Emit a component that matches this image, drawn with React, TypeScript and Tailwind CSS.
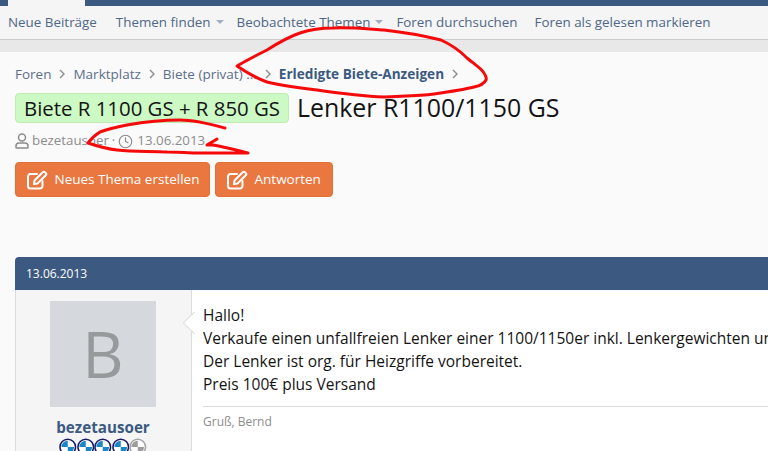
import React from 'react';
import { Clock } from 'lucide-react';

const NAV_ITEMS = [
  { label: 'Neue Beiträge', caret: false, gap: 'ml-0' },
  { label: 'Themen finden', caret: true, gap: 'ml-[19px]' },
  { label: 'Beobachtete Themen', caret: true, gap: 'ml-[13px]' },
  { label: 'Foren durchsuchen', caret: false, gap: 'ml-[13px]' },
  { label: 'Foren als gelesen markieren', caret: false, gap: 'ml-[17px]' },
];

const CRUMBS = ['Foren', 'Marktplatz', 'Biete (privat) ...'];

const Chevron = () => (
  <svg width="6" height="10" viewBox="0 0 6 10" className="mx-[8px] shrink-0" fill="none" stroke="#8c8c8c" strokeWidth="1.4">
    <path d="M1 1l4 4-4 4" />
  </svg>
);

const Roundel = ({ grey }: { grey?: boolean }) => {
  const a = grey ? '#9c9c9c' : '#1b86c6';
  const ring = grey ? '#a5a5a5' : '#1a1a66';
  return (
    <svg width="17.5" height="18" viewBox="0 0 18 18" className="shrink-0">
      <circle cx="9" cy="9" r="8" fill="#fff" stroke={ring} strokeWidth="1.6" />
      <path d="M9 9V2.5A6.5 6.5 0 0 0 2.5 9zM9 9v6.5A6.5 6.5 0 0 0 15.5 9z" fill={a} />
    </svg>
  );
};

const EditIcon = () => (
  <svg width="21" height="20" viewBox="0 0 21 20" className="shrink-0" fill="none" stroke="#fff" strokeWidth="2" strokeLinejoin="round" strokeLinecap="round">
    <path d="M15.5 11v5a2.5 2.5 0 0 1-2.5 2.5H3.5A2.5 2.5 0 0 1 1 16V6.500A2.500 2.500 0 0 1 3.500 4H10" />
    <path d="M7.500 10.500L15.800 2.200a1.500 1.500 0 0 1 2.100 0l.9.9a1.500 1.500 0 0 1 0 2.100L10.500 13.500l-3.500.5z" />
  </svg>
);

const ActionButton = ({ label, width }: { label: string; width: string }) => (
  <button className={`h-[35px] ${width} flex items-center gap-[6.5px] rounded-[4px] bg-[#e9773f] border border-[#e06f38] pl-[11px] text-white text-[13.5px]`}>
    <EditIcon />
    {label}
  </button>
);

export default function App() {
  return (
    <div className="relative h-[451px] w-[768px] overflow-hidden bg-[#fafafa] font-['Open_Sans','Noto_Sans',sans-serif] text-[#141414]">
      {/* top strip */}
      <div className="flex h-[6px] bg-[#3c5a81]">
        <div className="ml-[8px] w-[77px] bg-[#f5f5f5]" />
      </div>

      {/* sub nav */}
      <nav className="flex h-[34px] items-center border-b border-[#cbcbcb] bg-[#f5f5f5] pl-[8px] text-[13.4px] text-[#4f6786]">
        {NAV_ITEMS.map(item => (
          <span key={item.label} className={`flex items-center whitespace-nowrap ${item.gap}`}>
            {item.label}
            {item.caret && <span className="ml-[5px] h-0 w-0 border-x-[4px] border-t-[4px] border-x-transparent border-t-[#a3afc0]" />}
          </span>
        ))}
      </nav>
      <div className="h-[12px] bg-[#e8e8e8]" />

      <main className="px-[15px]">
        {/* breadcrumb */}
        <div className="mt-[13px] flex h-[18px] items-center text-[13.5px] text-[#5b6f8c]">
          {CRUMBS.map(c => (
            <React.Fragment key={c}>
              <span className="whitespace-nowrap">{c}</span>
              <Chevron />
            </React.Fragment>
          ))}
          <span className="whitespace-nowrap text-[13.6px] font-bold text-[#3c5a81]">Erledigte Biete-Anzeigen</span>
          <Chevron />
        </div>

        {/* title */}
        <h1 className="mt-[10px] flex h-[30px] items-center whitespace-nowrap text-[24.9px] font-normal">
          <span className="mr-[8px] flex h-[30px] w-[274px] items-center justify-center rounded-[4px] border border-[#bfeab4] bg-[#ccf9c4] text-[20.4px]">Biete R 1100 GS + R 850 GS</span>
          Lenker R1100/1150 GS
        </h1>

        {/* meta */}
        <div className="mt-[9px] flex h-[18px] items-center text-[13.3px] text-[#8c8c8c]">
          <svg width="14" height="16" viewBox="0 0 14 16" className="mr-[3px] shrink-0" fill="none" stroke="#8c8c8c" strokeWidth="1.5">
            <circle cx="7" cy="4.500" r="3.500" />
            <path d="M1 14.500v-1.500a3 3 0 0 1 3-3h6a3 3 0 0 1 3 3v1.500a.5.5 0 0 1-.5.5h-11a.5.5 0 0 1-.5-.5z" />
          </svg>
          <span>bezetausoer</span>
          <span className="mx-[3px]">·</span>
          <Clock size={15} strokeWidth={1.9} className="mr-[4px]" />
          <span>13.06.2013</span>
        </div>

        {/* buttons */}
        <div className="mt-[12px] flex gap-[5px]">
          <ActionButton label="Neues Thema erstellen" width="w-[195px]" />
          <ActionButton label="Antworten" width="w-[118px]" />
        </div>

        {/* post block */}
        <section className="mt-[60px] -mr-[15px]">
          <div className="flex h-[33px] items-center rounded-tl-[4px] bg-[#3c5a81] pl-[11px] text-[12px] text-white">13.06.2013</div>
          <div className="flex h-[161px]">
            <aside className="flex w-[177px] shrink-0 flex-col items-center border-x border-[#dcdcdc] bg-[#f5f5f5] pr-[1px] pt-[11px]">
              <div className="flex h-[106px] w-[106px] shrink-0 items-center justify-center bg-[#d5d8dc] text-[64px] leading-none text-[#969a9d]">B</div>
              <div className="mt-[9px] text-[15.2px] font-bold leading-[22px] text-[#3c5a81]">bezetausoer</div>
              <div className="flex shrink-0">
                <Roundel />
                <Roundel />
                <Roundel />
                <Roundel />
                <Roundel grey />
              </div>
            </aside>
            <article className="relative flex-1 bg-white pl-[11px] pt-[14px]">
              <span className="absolute left-[-6px] top-[25px] h-[16px] w-[16px] rotate-45 border-b border-l border-[#dcdcdc] bg-white" />
              <div className="relative whitespace-nowrap text-[15.5px] leading-[23px]">
                <p>Hallo!</p>
                <p>Verkaufe einen unfallfreien Lenker einer 1100/1150er inkl. Lenkergewichten und</p>
                <p>Der Lenker ist org. für Heizgriffe vorbereitet.</p>
                <p>Preis 100€ plus Versand</p>
              </div>
              <div className="mt-[10px] border-t border-[#dcdcdc] pt-[6px] text-[12px] text-[#8c8c8c]">Gruß, Bernd</div>
            </article>
          </div>
        </section>
      </main>

      {/* red marker scribbles on top of the screenshot */}
      <svg className="pointer-events-none absolute left-0 top-0" width="768" height="451" fill="none" stroke="#f40a0a" strokeWidth="3" strokeLinecap="round" strokeLinejoin="round">
        <path d="M237 66C247 60 257 55 267 50C278 43 288 37 300 33C312 29 322 28 333 28C350 27 368 29 384 30C402 32 425 36 441 40C452 45 460 51 467 58C474 64 481 68 484 73C486 76 487 78 486 80C484 84 479 86 474 87C462 90 448 92 434 94C418 96 400 96 384 97C360 96 338 93 317 90C300 88 283 86 267 82C255 78 246 72 237 66Z" />
        <path d="M225 128C210 124 196 120 180 120C162 120 144 122 127 125C117 127 108 129 100 132C95 135 91 139 88 143C97 146 107 149 117 150C134 152 150 151 167 152C178 152 189 153 200 153C216 153 232 153 248 153C236 150 225 147 213 145C211 145 209 145 207 145C210 143 214 141 217 139" />
      </svg>
    </div>
  );
}
